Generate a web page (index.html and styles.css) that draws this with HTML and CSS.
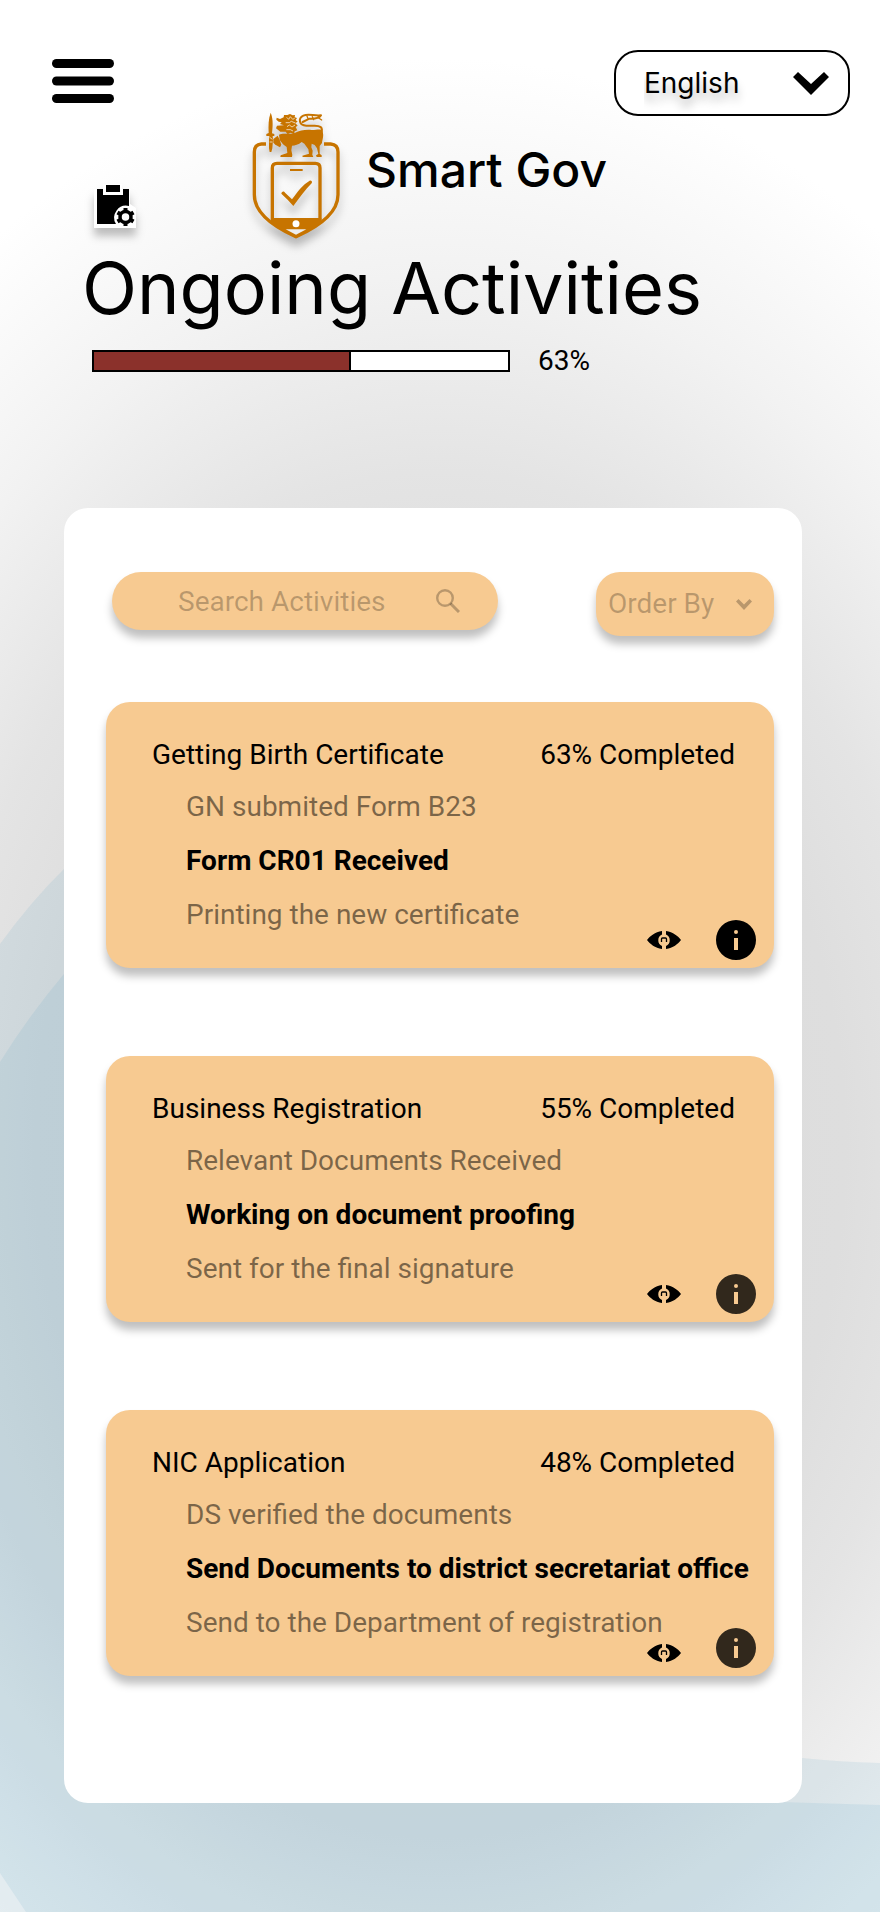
FILE: index.html
```html
<!DOCTYPE html>
<html lang="en">
<head>
<meta charset="utf-8">
<meta name="viewport" content="width=device-width, initial-scale=1">
<title>Smart Gov - Ongoing Activities</title>
<link rel="stylesheet" href="styles.css">
</head>
<body>
<div class="page">
  <svg class="backdrop" viewBox="0 0 880 1912" preserveAspectRatio="none" aria-hidden="true">
    <path class="wave" d="M0 944Q32 900 64 869C300 640 420 1740 802 1758Q840 1762 880 1763V1912H0Z"/>
    <path class="wave" d="M0 1062Q30 1014 64 974C300 760 400 1780 780 1802L880 1805V1912H26L0 1873Z"/>
  </svg>

  <header class="header">
    <div class="topbar">
      <button class="menu" type="button" aria-label="Open menu">
        <svg width="62" height="44" viewBox="0 0 62 44"><rect width="62" height="9" rx="4.5"/><rect y="17.5" width="62" height="9" rx="4.5"/><rect y="35" width="62" height="9" rx="4.5"/></svg>
      </button>
      <div class="picker language">
        <select class="picker-field" aria-label="Language"><option>English</option><option>Sinhala</option><option>Tamil</option></select>
        <svg class="picker-arrow" width="36" height="23" viewBox="0 0 36 23"><path d="M0 5L5 0L18 12L31 0L36 5L18 23Z"/></svg>
      </div>
    </div>
    <div class="brand">
      <svg class="clipboard" width="42" height="44" viewBox="0 0 42 44"><path fill="#fff" d="M0 5H9V0H28V5H36V20L42 24V44H0Z"/><path d="M3 5H9V11H29V5H35V22A12 12 0 0 0 22 40H3Z"/><path d="M12 1H26V8H12Z"/><circle cx="31.500" cy="33" r="5.500" fill="none" stroke="#000" stroke-width="3.500"/><path stroke="#000" stroke-width="4" d="M31.500 24V28M31.500 38V42M23.500 28.500L27 30.500M36 35.500L39.500 37.500M23.500 37.500L27 35.500M36 30.500L39.500 28.500"/></svg>
      <svg class="logo" width="88" height="128" viewBox="36 36 264 384" role="img" aria-label="Smart Gov crest">
        <g fill="none" stroke="#c77400" stroke-width="10">
          <path d="M78 132H64Q43 134 43 156V284C43 338 94 377 168 410C242 377 294 338 294 284V156Q294 134 272 132H252"/>
          <path d="M97 360V204Q97 190 111 190H226Q240 190 240 204V360"/>
          <path d="M150 210H188" stroke-width="6"/>
        </g>
        <g fill="#c77400">
          <path d="M93 354H244V370L168 415L93 370Z"/>
          <path d="M124 281C125 273 133 272 136 279L156 298C172 276 188 254 209 242C214 241 218 245 215 250C197 268 180 292 160 318Q142 297 124 281Z"/>
          <path d="M92 38C98 52 100 70 96 100L103 102V108H98L99 120L97 145L94 156H89L87 145V119L88 108H79V102L86 99C85 78 85 56 92 38Z"/>
          <path d="M100 117L113 107L119 119L124 134L120 142L106 134L100 128Z"/>
          <path d="M117 104C130 98 147 105 164 99C181 92 194 88 215 90C232 90 244 85 247 94C253 105 247 119 246 129L239 138V161L245 166V171H230L228 166L235 162L231 145L224 135L215 131L214 142L218 152L217 164L220 171H188L187 167L207 161L205 148L193 131L185 126C176 134 164 137 156 137L154 151L157 165L156 171H121L122 166L142 159L140 141L129 133L119 120Z"/>
          <path d="M110 53L120 57L131 52L132 45H142L150 42L158 46L165 45L164 52L171 54L167 60L173 65L166 69L173 77L167 81L172 91L164 94L162 103L152 98L143 103L137 95H121L108 85L111 77L132 76L120 72L125 67L116 65L109 59Z"/>
        </g>
        <g fill="none" stroke="#c77400" stroke-width="6" stroke-linecap="round">
          <path d="M244 100C250 82 241 76 220 77H199C176 76 174 55 190 47C207 39 222 49 243 46M243 46C238 53 223 57 208 56L188 66"/>
          <path d="M201 49L205 58M217 50L221 59M236 54L245 60" stroke-width="4"/>
        </g>
        <g fill="none" stroke="#fff" stroke-width="2">
          <path d="M140 52L146 58L151 50L158 58L164 55M137 68H148L154 64L166 69M141 80L148 75L156 81L165 75M139 89H151L159 93"/>
          <path d="M89 112L97 118M89 126H97"/>
        </g>
        <circle cx="168" cy="371" r="10.500" fill="#fff"/>
        <path fill="#eee" d="M137 388H199L168 404Z"/>
      </svg>
      <span class="brand-name">Smart Gov</span>
    </div>
    <h1 class="title">Ongoing Activities</h1>
    <div class="overall">
      <progress class="meter" id="overall" max="100" value="62"></progress>
      <label for="overall">63%</label>
    </div>
  </header>

  <main class="panel">
    <div class="toolbar">
      <label class="search">
        <input class="search-field" type="text" placeholder="Search Activities" aria-label="Search Activities">
        <svg width="24" height="24" viewBox="0 0 24 24" fill="none" stroke="currentColor"><circle cx="9" cy="9" r="7.800" stroke-width="2.400"/><path d="M14.500 14.500L23 23" stroke-width="3"/></svg>
      </label>
      <div class="picker order">
        <select class="picker-field" aria-label="Order By"><option>Order By</option><option>Name</option><option>Progress</option></select>
        <svg class="picker-arrow" width="16" height="11" viewBox="0 0 16 11"><path d="M0 2.500L2.500 0L8 5.500L13.500 0L16 2.500L8 11Z"/></svg>
      </div>
    </div>

    <svg class="symbols" aria-hidden="true">
      <symbol id="eye" viewBox="0 0 34 18"><path d="M15 0V3.500A6.300 6.300 0 0 0 15 15V18C8 17 3 13 0 9C3 5 8 1 15 0ZM19 0V3.500A6.300 6.300 0 0 1 19 15V18C26 17 31 13 34 9C31 5 26 1 19 0Z"/><path d="M14.500 11V8Q14.500 7 15.500 7H18.500Q19.500 7 19.500 8V11" fill="none" stroke="currentColor" stroke-width="1.300"/></symbol>
      <symbol id="info" viewBox="0 0 40 40"><path fill-rule="evenodd" d="M20 0A20 20 0 1 1 20 40A20 20 0 1 1 20 0ZM18 18V30H22V18ZM20 10A2 2 0 1 0 20 14A2 2 0 1 0 20 10Z"/></symbol>
    </svg>

    <div class="cards">
      <article class="card">
        <div class="card-head"><h2>Getting Birth Certificate</h2><span>63% Completed</span></div>
        <ul class="steps"><li>GN submited Form B23</li><li class="current">Form CR01 Received</li><li>Printing the new certificate</li></ul>
        <div class="actions">
          <button type="button" aria-label="View"><svg width="34" height="18"><use href="#eye"/></svg></button>
          <button type="button" aria-label="Details"><svg width="40" height="40"><use href="#info"/></svg></button>
        </div>
      </article>
      <article class="card">
        <div class="card-head"><h2>Business Registration</h2><span>55% Completed</span></div>
        <ul class="steps"><li>Relevant Documents Received</li><li class="current">Working on document proofing</li><li>Sent for the final signature</li></ul>
        <div class="actions">
          <button type="button" aria-label="View"><svg width="34" height="18"><use href="#eye"/></svg></button>
          <button class="muted" type="button" aria-label="Details"><svg width="40" height="40"><use href="#info"/></svg></button>
        </div>
      </article>
      <article class="card">
        <div class="card-head"><h2>NIC Application</h2><span>48% Completed</span></div>
        <ul class="steps"><li>DS verified the documents</li><li class="current">Send Documents to district secretariat office</li><li>Send to the Department of registration</li></ul>
        <div class="actions low">
          <button type="button" aria-label="View"><svg width="34" height="18"><use href="#eye"/></svg></button>
          <button class="muted" type="button" aria-label="Details"><svg width="40" height="40"><use href="#info"/></svg></button>
        </div>
      </article>
    </div>
  </main>
</div>
</body>
</html>
```
FILE: styles.css
```css
* { box-sizing: border-box; }
body { margin: 0; color: #000; font: 28px/32px Roboto, sans-serif; }
button { padding: 0; border: 0; background: none; color: inherit; cursor: pointer; }
svg { display: block; flex: none; }

.page {
  position: relative;
  isolation: isolate;
  min-height: 100vh;
  padding: 50px 30px 100px 52px;
  background: radial-gradient(92% 57% at 50% 60%, #d9d9d9 0%, #dedede 50%, #e4e4e4 62%, #f2f2f2 80%, #fff 100%);
}
.backdrop { position: absolute; inset: 0; z-index: -1; width: 100%; height: 100%; }
.wave { fill: rgba(72, 156, 187, 0.11); }

.topbar { display: flex; align-items: center; justify-content: space-between; height: 66px; }
.menu { padding-bottom: 4px; }

.picker { position: relative; }
.picker-field {
  appearance: none;
  width: 100%;
  height: 100%;
  border: 0;
  border-radius: 24px;
  background: transparent;
  color: inherit;
  font: inherit;
}
.picker-arrow { position: absolute; top: 0; bottom: 0; margin: auto 0; fill: currentColor; pointer-events: none; }
.language { width: 236px; height: 66px; font-family: Inter, sans-serif; }
.language .picker-field { padding: 0 56px 0 28px; border: 2px solid #000; background: #fff; line-height: 60px; text-shadow: 0 8px 8px rgba(0, 0, 0, 0.25); }
.language .picker-arrow { right: 21px; }

.brand { display: flex; align-items: center; margin: -4px 0 0 42px; }
.clipboard { align-self: flex-end; margin: 0 116px 12px 0; filter: drop-shadow(0 8px 4px rgba(0, 0, 0, 0.25)); }
.logo { margin-right: 26px; filter: drop-shadow(0 8px 4px rgba(0, 0, 0, 0.25)); }
.brand-name { padding-bottom: 12px; font: 500 48px/60px Inter, sans-serif; }

.title { margin: 4px 0 0 30px; font: 400 72px/88px Inter, sans-serif; }

.overall { display: flex; align-items: center; gap: 28px; margin: 13px 0 0 40px; }
.meter { appearance: none; width: 418px; height: 22px; border: 2px solid #000; background: #fff; }
.meter::-webkit-progress-bar { background: #fff; }
.meter::-webkit-progress-value { border-right: 2px solid #000; background: #8b312b; }

.panel { margin: 131px 48px 0 12px; padding: 64px 28px 127px 42px; border-radius: 24px; background: #fff; }
.toolbar { display: flex; align-items: flex-start; justify-content: space-between; padding-left: 6px; color: rgba(0, 0, 0, 0.25); }
.search {
  display: flex;
  align-items: center;
  width: 386px;
  height: 58px;
  padding: 0 38px 0 66px;
  border-radius: 29px;
  background: #f7ca91;
  box-shadow: 0 8px 8px rgba(0, 0, 0, 0.25);
}
.search-field { flex: 1; min-width: 0; padding: 2px 0 0; border: 0; outline: 0; background: none; color: #000; font: inherit; }
.search-field::placeholder { color: rgba(0, 0, 0, 0.25); }
.order { width: 178px; height: 64px; border-radius: 24px; background: #f7ca91; box-shadow: 0 8px 8px rgba(0, 0, 0, 0.25); }
.order .picker-field { padding: 0 12px; }
.order .picker-arrow { right: 22px; }

.symbols { position: absolute; width: 0; height: 0; }
.cards { display: flex; flex-direction: column; gap: 88px; margin-top: 66px; }
.card {
  position: relative;
  padding: 37px 0 26px 46px;
  border-radius: 24px;
  background: #f7ca91;
  box-shadow: 0 8px 8px rgba(0, 0, 0, 0.25);
}
.card-head { display: flex; justify-content: space-between; padding-right: 39px; }
.card-head h2 { margin: 0; font: inherit; }
.steps { margin: 9px 0 0; padding: 0 0 0 34px; list-style: none; line-height: 54px; color: rgba(0, 0, 0, 0.5); }
.steps .current { color: #000; font-weight: 700; }
.actions { position: absolute; right: 18px; bottom: 8px; display: flex; align-items: center; gap: 35px; }
.actions svg { fill: currentColor; }
.actions button:first-child { padding: 6px 0; }
.low { align-items: flex-end; }
.muted { opacity: 0.8; }
```
